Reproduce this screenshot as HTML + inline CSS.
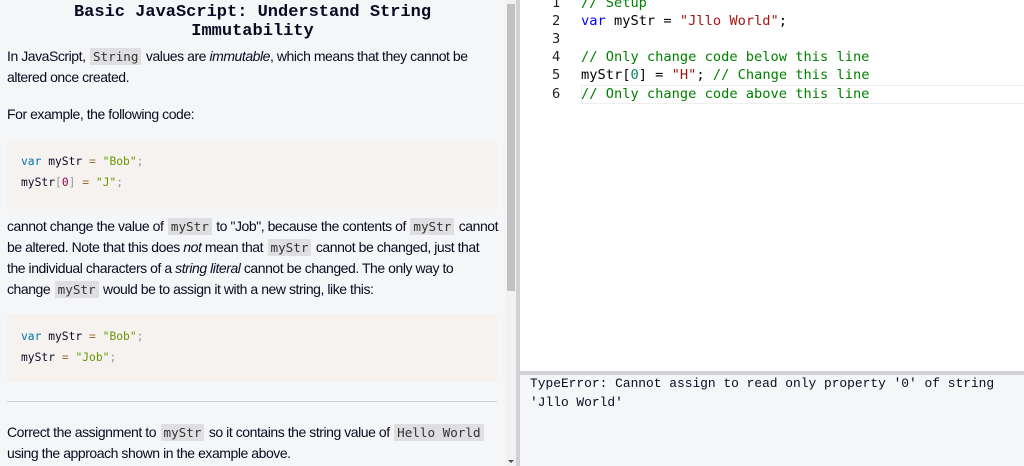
<!DOCTYPE html>
<html><head><meta charset="utf-8"><style>
*{margin:0;padding:0;box-sizing:border-box}
body{width:1024px;height:466px;overflow:hidden;background:#f5f6f7;position:relative;font-family:"Liberation Sans",sans-serif;color:#0a0a23}
.a{position:absolute;white-space:nowrap}
.p{font-size:14px;letter-spacing:-0.45px}
.ic{font-family:"DejaVu Sans Mono",monospace;font-size:12.6px;letter-spacing:0;background:#dfdfe2;padding:1px 3px;margin:0 1px;color:#333}
.cb{position:absolute;left:7px;width:490px;background:#f5f2f0}
.cl{position:absolute;left:21px;font-family:"DejaVu Sans Mono",monospace;font-size:11.3px;color:#0a0a23}
.k{color:#07a}.s{color:#690}.o{color:#9a6e3a}.n{color:#905}.pu{color:#999}
.ed{position:absolute;left:520px;top:0;width:504px;height:371px;background:#fff}
.ln{position:absolute;left:32px;font-family:"DejaVu Sans Mono",monospace;font-size:13.7px;color:#222}
.cd{position:absolute;left:61px;font-family:"DejaVu Sans Mono",monospace;font-size:13.7px;color:#000;white-space:pre}
.c{color:#008000}.kw{color:#0000ff}.st{color:#a31515}.nm{color:#098658}
</style></head><body>
<div class="a" style="left:0;width:505px;top:3px;text-align:center;font-family:'Liberation Mono',monospace;font-weight:bold;font-size:17px;line-height:19px;color:#0a0a23">Basic JavaScript: Understand String<br>Immutability</div>
<div class="a p" style="left:7px;top:48px">In JavaScript, <span class="ic">String</span> values are <i>immutable</i>, which means that they cannot be</div>
<div class="a p" style="left:7px;top:69px">altered once created.</div>
<div class="a p" style="left:7px;top:106px">For example, the following code:</div>
<div class="cb" style="top:141px;height:68px"></div>
<div class="cl" style="top:155px"><span class="k">var</span> myStr <span class="o">=</span> <span class="s">"Bob"</span><span class="pu">;</span></div>
<div class="cl" style="top:176px">myStr<span class="pu">[</span><span class="n">0</span><span class="pu">]</span> <span class="o">=</span> <span class="s">"J"</span><span class="pu">;</span></div>
<div class="a p" style="left:7px;top:218px">cannot change the value of <span class="ic">myStr</span> to "Job", because the contents of <span class="ic">myStr</span> cannot</div>
<div class="a p" style="left:7px;top:239px">be altered. Note that this does <i>not</i> mean that <span class="ic">myStr</span> cannot be changed, just that</div>
<div class="a p" style="left:7px;top:260px">the individual characters of a <i>string literal</i> cannot be changed. The only way to</div>
<div class="a p" style="left:7px;top:281px">change <span class="ic">myStr</span> would be to assign it with a new string, like this:</div>
<div class="cb" style="top:314px;height:68px"></div>
<div class="cl" style="top:330px"><span class="k">var</span> myStr <span class="o">=</span> <span class="s">"Bob"</span><span class="pu">;</span></div>
<div class="cl" style="top:351px">myStr <span class="o">=</span> <span class="s">"Job"</span><span class="pu">;</span></div>
<div class="a" style="left:7px;top:401px;width:490px;height:1px;background:#d0d0d5"></div>
<div class="a p" style="left:7px;top:424px">Correct the assignment to <span class="ic">myStr</span> so it contains the string value of <span class="ic">Hello World</span></div>
<div class="a p" style="left:7px;top:445px">using the approach shown in the example above.</div>
<div class="a" style="left:506px;top:0;width:10px;height:466px;background:#f1f1f1"></div>
<div class="a" style="left:507px;top:4px;width:8px;height:287px;background:#c1c1c1"></div>
<div class="a" style="left:508px;top:460px;width:0;height:0;border-left:3px solid transparent;border-right:3px solid transparent;border-top:3px solid #505050"></div>
<div class="a" style="left:516px;top:0;width:4px;height:466px;background:#d0d0d5"></div>
<div class="ed">
<div class="ln" style="top:-5px">1</div><div class="cd c" style="top:-5px">// Setup</div>
<div class="ln" style="top:13px">2</div><div class="cd" style="top:13px"><span class="kw">var</span> myStr = <span class="st">"Jllo World"</span>;</div>
<div class="ln" style="top:31px">3</div>
<div class="ln" style="top:49px">4</div><div class="cd c" style="top:49px">// Only change code below this line</div>
<div class="ln" style="top:67px">5</div><div class="cd" style="top:67px">myStr[<span class="nm">0</span>] = <span class="st">"H"</span>; <span class="c">// Change this line</span></div>
<div class="a" style="left:61px;top:85px;width:443px;height:19px;border:1px solid #eee;border-right:none"></div>
<div class="ln" style="top:86px">6</div><div class="cd c" style="top:86px">// Only change code above this line</div>
</div>
<div class="a" style="left:520px;top:371px;width:504px;height:4px;background:#d0d0d5"></div>
<div class="a" style="left:530px;top:374px;font-family:'Liberation Mono',monospace;font-size:12.9px;line-height:19px;color:#0a0a23">TypeError: Cannot assign to read only property '0' of string<br>'Jllo World'</div>
</body></html>
